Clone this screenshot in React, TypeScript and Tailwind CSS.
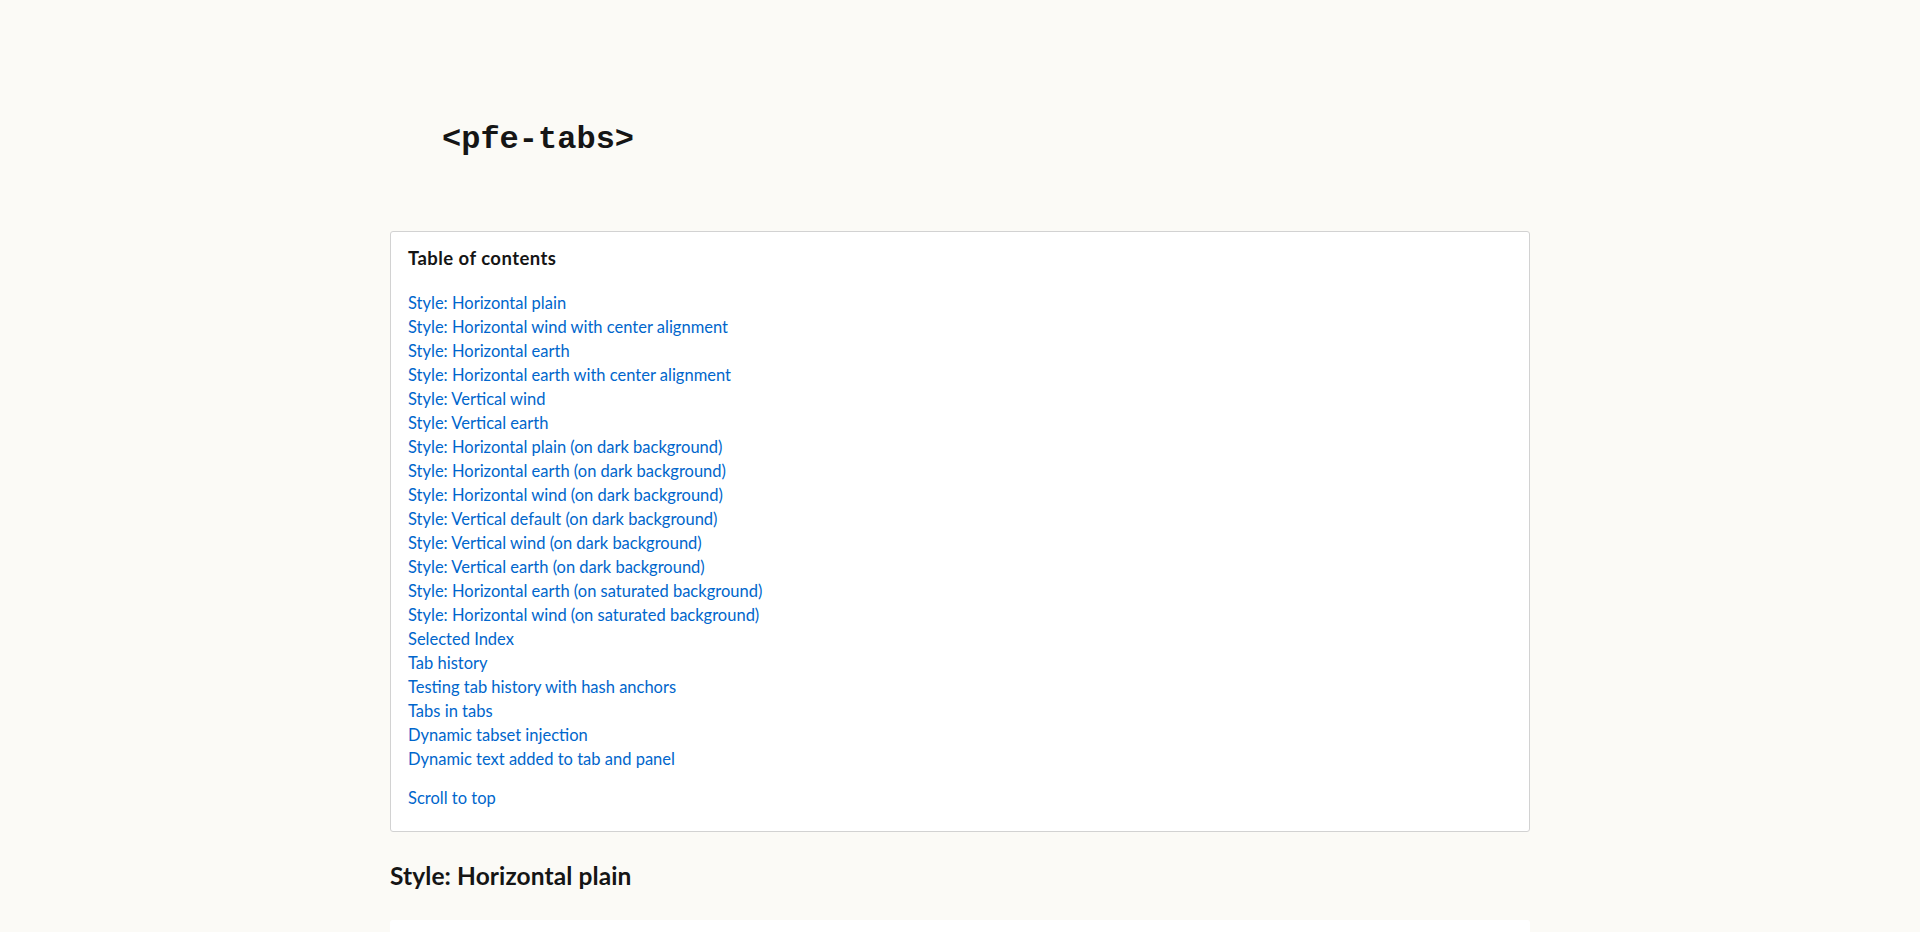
import React from "react";

const links = [
  "Style: Horizontal plain",
  "Style: Horizontal wind with center alignment",
  "Style: Horizontal earth",
  "Style: Horizontal earth with center alignment",
  "Style: Vertical wind",
  "Style: Vertical earth",
  "Style: Horizontal plain (on dark background)",
  "Style: Horizontal earth (on dark background)",
  "Style: Horizontal wind (on dark background)",
  "Style: Vertical default (on dark background)",
  "Style: Vertical wind (on dark background)",
  "Style: Vertical earth (on dark background)",
  "Style: Horizontal earth (on saturated background)",
  "Style: Horizontal wind (on saturated background)",
  "Selected Index",
  "Tab history",
  "Testing tab history with hash anchors",
  "Tabs in tabs",
  "Dynamic tabset injection",
  "Dynamic text added to tab and panel",
];

export default function App() {
  return (
    <div
      className="min-h-[932px] bg-[#fbfaf6] text-[#151515]"
      style={{ fontFamily: "Lato, 'Noto Sans', sans-serif" }}
    >
      <div className="mx-auto w-[1140px]">
        <header className="pt-[121px] pl-[52px]">
          <h1 className="text-[32px] leading-[38px] font-bold font-['Liberation_Mono',monospace]">
            &lt;pfe-tabs&gt;
          </h1>
        </header>
        <nav className="mt-[72px] rounded-[3px] border border-[#d2d2d2] bg-white pl-[17px] pt-[15px] pb-[21px]">
          <h2 className="text-[18.5px] leading-[22px] font-bold tracking-[0.45px]">Table of contents</h2>
          <ul className="mt-[22px]">
            {links.map((l) => (
              <li key={l} className="text-[16.5px] leading-[24px]">
                <a href="#" className="text-[#0066cc]">
                  {l}
                </a>
              </li>
            ))}
          </ul>
          <p className="mt-[15px] text-[16.5px] leading-[24px]">
            <a href="#" className="text-[#0066cc]">
              Scroll to top
            </a>
          </p>
        </nav>
        <h2 className="mt-[28px] text-[24.5px] leading-[31px] font-bold tracking-[0.1px]">
          Style: Horizontal plain
        </h2>
        <div className="mt-[29px] h-[300px] rounded-[3px] bg-white"></div>
      </div>
    </div>
  );
}
